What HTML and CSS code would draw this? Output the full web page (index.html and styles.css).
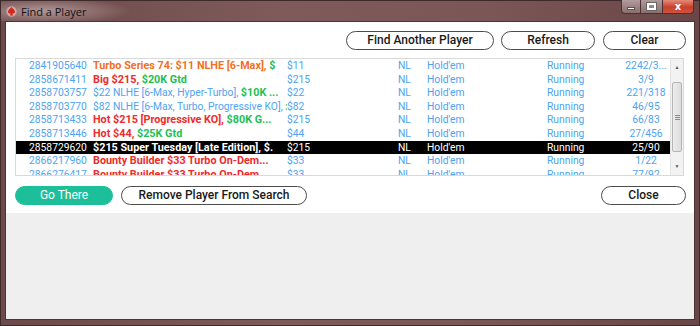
FILE: index.html
```html
<!DOCTYPE html>
<html lang="en">

<head>
  <meta charset="UTF-8">
  <title>Find a Player</title>
  <link rel="stylesheet" href="styles.css">
</head>

<body>
  <div class="window">
    <!-- Title bar -->
    <div class="titlebar">
      <svg class="app-icon" width="11" height="11" viewBox="0 0 12 12">
        <circle cx="6" cy="6" r="5.6" fill="#e8e0e0" opacity="0.5"/>
        <path d="M6 1.2 C4.6 3 2.2 4.3 2.2 6.4 C2.2 7.8 3.6 8.6 5 7.9 L4.4 10.4 H7.6 L7 7.9 C8.4 8.6 9.8 7.8 9.8 6.4 C9.8 4.3 7.4 3 6 1.2 Z" fill="#d9261c"/>
      </svg>
      <span class="title">Find a Player</span>
      <div class="controls">
        <div class="ctl ctl-min"><span class="min-bar"></span></div>
        <div class="ctl ctl-max"><span class="max-box"></span></div>
        <div class="ctl ctl-close">x</div>
      </div>
    </div>

    <!-- Client area -->
    <div class="client">
      <div class="panel">
        <div class="toolbar">
          <button class="btn btn-find">Find Another Player</button>
          <button class="btn btn-refresh">Refresh</button>
          <button class="btn btn-clear">Clear</button>
        </div>

        <div class="list">
          <div class="rows">
            <div class="row">
              <span class="c-id">2841905640</span>
              <span class="c-name"><b class="orange">Turbo Series 74: $11 NLHE [6-Max], </b><b class="green">$</b></span>
              <span class="c-buy">$11</span>
              <span class="c-lim">NL</span>
              <span class="c-game">Hold'em</span>
              <span class="c-state">Running</span>
              <span class="c-pl">2242/3...</span>
            </div>
            <div class="row">
              <span class="c-id">2858671411</span>
              <span class="c-name"><b class="red">Big $215, </b><b class="green">$20K Gtd</b></span>
              <span class="c-buy">$215</span>
              <span class="c-lim">NL</span>
              <span class="c-game">Hold'em</span>
              <span class="c-state">Running</span>
              <span class="c-pl">3/9</span>
            </div>
            <div class="row">
              <span class="c-id">2858703757</span>
              <span class="c-name">$22 NLHE [6-Max, Hyper-Turbo], <b class="green">$10K ...</b></span>
              <span class="c-buy">$22</span>
              <span class="c-lim">NL</span>
              <span class="c-game">Hold'em</span>
              <span class="c-state">Running</span>
              <span class="c-pl">221/318</span>
            </div>
            <div class="row">
              <span class="c-id">2858703770</span>
              <span class="c-name">$82 NLHE [6-Max, Turbo, Progressive KO], <b class="green">:</b></span>
              <span class="c-buy">$82</span>
              <span class="c-lim">NL</span>
              <span class="c-game">Hold'em</span>
              <span class="c-state">Running</span>
              <span class="c-pl">46/95</span>
            </div>
            <div class="row">
              <span class="c-id">2858713433</span>
              <span class="c-name"><b class="red">Hot $215 [Progressive KO], </b><b class="green">$80K G...</b></span>
              <span class="c-buy">$215</span>
              <span class="c-lim">NL</span>
              <span class="c-game">Hold'em</span>
              <span class="c-state">Running</span>
              <span class="c-pl">66/83</span>
            </div>
            <div class="row">
              <span class="c-id">2858713446</span>
              <span class="c-name"><b class="red">Hot $44, </b><b class="green">$25K Gtd</b></span>
              <span class="c-buy">$44</span>
              <span class="c-lim">NL</span>
              <span class="c-game">Hold'em</span>
              <span class="c-state">Running</span>
              <span class="c-pl">27/456</span>
            </div>
            <div class="row selected">
              <span class="c-id">2858729620</span>
              <span class="c-name"><b>$215 Super Tuesday [Late Edition], $.</b></span>
              <span class="c-buy">$215</span>
              <span class="c-lim">NL</span>
              <span class="c-game">Hold'em</span>
              <span class="c-state">Running</span>
              <span class="c-pl">25/90</span>
            </div>
            <div class="row">
              <span class="c-id">2866217960</span>
              <span class="c-name"><b class="red">Bounty Builder $33 Turbo On-Dem...</b></span>
              <span class="c-buy">$33</span>
              <span class="c-lim">NL</span>
              <span class="c-game">Hold'em</span>
              <span class="c-state">Running</span>
              <span class="c-pl">1/22</span>
            </div>
            <div class="row">
              <span class="c-id">2866276417</span>
              <span class="c-name"><b class="red">Bounty Builder $33 Turbo On-Dem...</b></span>
              <span class="c-buy">$33</span>
              <span class="c-lim">NL</span>
              <span class="c-game">Hold'em</span>
              <span class="c-state">Running</span>
              <span class="c-pl">77/92</span>
            </div>
          </div>
          <div class="scrollbar">
            <div class="arrow up">&#9650;</div>
            <div class="track">
              <div class="thumb"><span class="grip"></span></div>
            </div>
            <div class="arrow down">&#9660;</div>
          </div>
        </div>

        <div class="actions">
          <button class="btn btn-go">Go There</button>
          <button class="btn btn-remove">Remove Player From Search</button>
          <button class="btn btn-close">Close</button>
        </div>
      </div>
    </div>
  </div>
</body>

</html>
```

FILE: styles.css
```css
body {
  margin: 0;
  width: 700px;
  height: 326px;
  overflow: hidden;
  font-family: Roboto, "Liberation Sans", sans-serif;
}

.window {
  width: 700px;
  height: 326px;
  box-sizing: border-box;
  background: linear-gradient(90deg, #6d4a4a, #7e5a5a 40%, #7b5656 70%, #6a4646);
  border: 1px solid #3e2a2a;
  display: flex;
  flex-direction: column;
}

/* title bar */
.titlebar {
  height: 20px;
  display: flex;
  align-items: center;
  position: relative;
  background: radial-gradient(ellipse 90px 14px at 40px 10px, rgba(255, 240, 240, 0.45), rgba(255, 255, 255, 0));
}

.app-icon {
  margin-left: 5px;
  margin-top: 1px;
}

.title {
  margin-left: 4px;
  font-family: "Open Sans", "DejaVu Sans", sans-serif;
  font-size: 11px;
  color: #111;
}

.controls {
  position: absolute;
  top: -1px;
  right: 5px;
  display: flex;
}

.ctl {
  height: 14px;
  border: 1px solid #4a3030;
  border-top: none;
  box-sizing: border-box;
  display: flex;
  align-items: center;
  justify-content: center;
}

.ctl-min {
  width: 20px;
  border-radius: 0 0 0 4px;
  background: linear-gradient(#b39a9a, #8c6e6e);
}

.ctl-max {
  width: 22px;
  border-left: none;
  background: linear-gradient(#b39a9a, #8c6e6e);
}

.ctl-close {
  width: 31px;
  border-left: none;
  border-radius: 0 0 4px 0;
  background: linear-gradient(#e58a78, #c7402c 55%, #d1543e);
  color: #fff;
  font-family: "DejaVu Sans", sans-serif;
  font-weight: bold;
  font-size: 10px;
  line-height: 10px;
}

.min-bar {
  width: 8px;
  height: 3px;
  margin-top: 4px;
  background: #fff;
  border: 1px solid #555;
  box-sizing: border-box;
}

.max-box {
  width: 9px;
  height: 7px;
  border: 2px solid #fff;
  outline: 1px solid #666;
  box-sizing: border-box;
}

/* client */
.client {
  flex: 1;
  margin: 0 4px 5px 4px;
  border: 1px solid #4b3434;
  background: #efefef;
}

.panel {
  background: #fff;
  padding: 9px 8px 8px 9px;
}

.toolbar {
  display: flex;
  justify-content: flex-end;
  gap: 7px;
  margin-bottom: 8px;
}

.btn {
  height: 19px;
  padding: 0;
  border: 1px solid #4c4c4c;
  border-radius: 10px;
  background: #fff;
  color: #1a1a1a;
  font-family: Roboto, "Liberation Sans", sans-serif;
  font-size: 12px;
  font-weight: 500;
  line-height: 17px;
}

.btn-find { width: 148px; }
.btn-refresh { width: 94px; }
.btn-clear { width: 83px; margin-left: 1px; }

.list {
  height: 118px;
  box-sizing: border-box;
  border: 1px solid #d9d9d9;
  margin-right: 2px;
  display: flex;
  overflow: hidden;
}

.rows {
  flex: 1;
  font-size: 10.3px;
  color: #4ea3f2;
}

.row {
  display: grid;
  grid-template-columns: 77px 194px 111px 29px 120px 76px 46px;
  height: 13.6px;
  line-height: 13.6px;
  white-space: nowrap;
}

.row span {
  overflow: hidden;
}

.c-id { padding-left: 13px; }
.c-name { padding-right: 6px; }
.c-pl { text-align: center; }

.row b {
  font-weight: bold;
  font-size: 10.8px;
}

.orange { color: #f2701e; }
.red { color: #ef2b2b; }
.green { color: #1dbf55; }

.row.selected {
  background: #000;
  color: #fff;
}

.row.selected b { color: #fff; }

/* scrollbar */
.scrollbar {
  width: 12px;
  background: #f2f2f2;
  border-left: 1px solid #e4e4e4;
  display: flex;
  flex-direction: column;
}

.arrow {
  height: 17px;
  font-size: 5px;
  color: #555;
  text-align: center;
  line-height: 17px;
}

.track {
  flex: 1;
  padding-top: 6px;
}

.thumb {
  height: 68px;
  margin: 0 1px;
  border: 1px solid #b5b5b5;
  border-radius: 2px;
  background: linear-gradient(90deg, #ececec, #dcdcdc);
  display: flex;
  align-items: center;
  justify-content: center;
}

.grip {
  width: 5px;
  height: 5px;
  background: repeating-linear-gradient(#8a8a8a 0 1px, transparent 1px 2px);
}

/* bottom buttons */
.actions {
  display: flex;
  gap: 8px;
  margin-top: 10px;
}

.btn-go {
  width: 98px;
  border-color: #1dbf9a;
  background: #1dbf9a;
  color: #fff;
  font-weight: normal;
}

.btn-remove { width: 186px; }

.btn-close {
  width: 85px;
  margin-left: auto;
}
```
